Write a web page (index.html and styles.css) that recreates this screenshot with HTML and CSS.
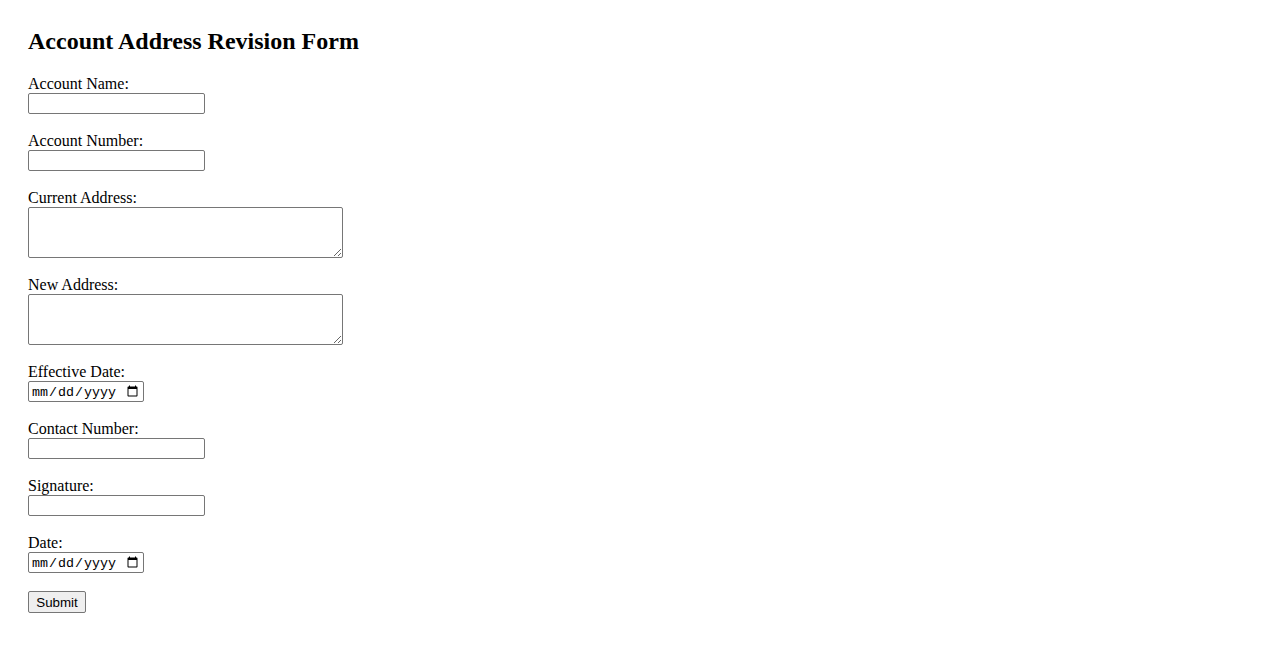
FILE: index.html
```html
<!DOCTYPE html>
<html lang="en">
<head>
<meta charset="utf-8">
<title>Account Address Revision Form</title>
<link rel="stylesheet" href="styles.css">
</head>
<body>
<div class="page">
  <h2 class="title">Account Address Revision Form</h2>
  <form class="form">
    <div class="field">
      <label class="label" for="name">Account Name:</label>
      <input class="text" type="text" id="name">
    </div>
    <div class="field">
      <label class="label" for="number">Account Number:</label>
      <input class="text" type="text" id="number">
    </div>
    <div class="field">
      <label class="label" for="current">Current Address:</label>
      <textarea class="area" id="current"></textarea>
    </div>
    <div class="field">
      <label class="label" for="new">New Address:</label>
      <textarea class="area" id="new"></textarea>
    </div>
    <div class="field">
      <label class="label" for="eff">Effective Date:</label>
      <input class="date" type="date" id="eff">
    </div>
    <div class="field">
      <label class="label" for="contact">Contact Number:</label>
      <input class="text" type="text" id="contact">
    </div>
    <div class="field">
      <label class="label" for="sig">Signature:</label>
      <input class="text" type="text" id="sig">
    </div>
    <div class="field">
      <label class="label" for="date">Date:</label>
      <input class="date" type="date" id="date">
    </div>
    <div class="field">
      <button class="submit" type="submit">Submit</button>
    </div>
  </form>
</div>
</body>
</html>
```
FILE: styles.css
```css
html, body {
  margin: 0;
  padding: 0;
  background: #fff;
}
body {
  font-family: "Liberation Serif", "Times New Roman", serif;
  font-size: 16px;
  color: #000;
}
.page {
  padding: 28px;
}
.title {
  margin: 0 0 19px;
  font-size: 24px;
  font-weight: bold;
  line-height: 27.5px;
}
.form {
  display: flex;
  flex-direction: column;
  align-items: flex-start;
}
.field {
  display: flex;
  flex-direction: column;
  align-items: flex-start;
  margin-bottom: 18px;
}
.label {
  display: block;
  height: 18px;
  line-height: 18px;
}
.text {
  box-sizing: border-box;
  width: 177px;
  height: 21px;
  margin: 0;
  border: 1px solid #767676;
  border-radius: 2px;
  padding: 1px 2px;
  font-family: "Liberation Sans", Arial, sans-serif;
  font-size: 13.33px;
}
.area {
  box-sizing: border-box;
  width: 315px;
  height: 51px;
  margin: 0;
  border: 1px solid #767676;
  border-radius: 2px;
  padding: 2px;
  font-family: "Liberation Mono", monospace;
  font-size: 13.33px;
}
.date {
  box-sizing: border-box;
  width: 116px;
  height: 21px;
  margin: 0;
  border: 1px solid #767676;
  border-radius: 2px;
  padding: 2px 2px 0;
  font-family: "Liberation Mono", monospace;
  font-size: 13.33px;
}
.submit {
  box-sizing: border-box;
  height: 22px;
  width: 58px;
  margin: 0;
  padding: 2px 6px 0;
  border: 1px solid #767676;
  border-radius: 2px;
  background: #efefef;
  font-family: "Liberation Sans", Arial, sans-serif;
  font-size: 13.33px;
  color: #000;
}
```
